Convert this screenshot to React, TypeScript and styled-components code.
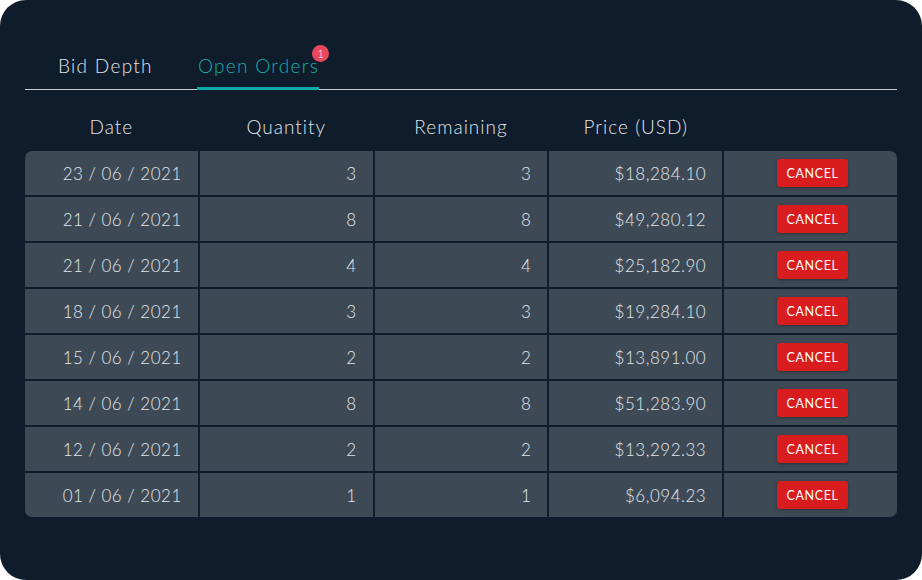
import React from "react";
import styled, { createGlobalStyle } from "styled-components";

const Global = createGlobalStyle`
  html, body { margin: 0; padding: 0; background: #ffffff; }
  body { font-family: "Lato", "Open Sans", sans-serif; }
`;

const Card = styled.div`
  width: 922px;
  height: 580px;
  box-sizing: border-box;
  background: #0e1c2b;
  border-radius: 26px;
  padding: 44px 25px 0 25px;
`;

const TabBar = styled.div`
  display: flex;
  gap: 44px;
  padding-left: 32px;
  border-bottom: 1px solid #c9ced3;
`;

const Tab = styled.div<{ $active?: boolean }>`
  position: relative;
  font-size: 19px;
  font-weight: 300;
  letter-spacing: 1.3px;
  line-height: 22px;
  padding: 11px 0 10px 1px;
  color: ${(p) => (p.$active ? "#17aeac" : "#e0e4e8")};
  border-bottom: 3px solid ${(p) => (p.$active ? "#0fa9a7" : "transparent")};
  margin-bottom: -1px;
`;

const Badge = styled.span`
  position: absolute;
  top: 1px;
  right: -10px;
  width: 17px;
  height: 17px;
  border-radius: 50%;
  background: #e8475c;
  color: #fff;
  font-size: 11px;
  letter-spacing: 0;
  line-height: 17px;
  text-align: center;
`;

const Columns = `
  display: grid;
  grid-template-columns: repeat(5, 1fr);
  column-gap: 2px;
`;

const HeaderRow = styled.div`
  ${Columns}
  padding: 25px 0 0;
  height: 61px;
  box-sizing: border-box;
`;

const HeaderCell = styled.div`
  text-align: center;
  font-size: 19px;
  font-weight: 300;
  letter-spacing: 1px;
  color: #e0e4e8;
  line-height: 24px;
`;

const Table = styled.div`
  display: flex;
  flex-direction: column;
  gap: 2px;
  border-radius: 7px;
  overflow: hidden;
`;

const Row = styled.div`
  ${Columns}
  height: 44px;
`;

const Cell = styled.div`
  background: #3d4a56;
  color: #e2e6ea;
  font-size: 17px;
  font-weight: 300;
  letter-spacing: 0.5px;
  display: flex;
  align-items: center;
  justify-content: flex-end;
  padding-right: 16px;
`;

const ActionCell = styled(Cell)`
  justify-content: center;
  padding: 0 0 0 4px;
`;

const CancelButton = styled.button`
  width: 71px;
  height: 28px;
  border: none;
  border-radius: 3px;
  background: #d91c1e;
  color: #ffffff;
  font-family: "Lato", sans-serif;
  font-size: 12.5px;
  letter-spacing: 0.6px;
  box-shadow: 0 1px 3px rgba(0, 0, 0, 0.35);
  padding: 0;
  cursor: pointer;
`;

const orders = [
  ["23 / 06 / 2021", "3", "3", "$18,284.10"],
  ["21 / 06 / 2021", "8", "8", "$49,280.12"],
  ["21 / 06 / 2021", "4", "4", "$25,182.90"],
  ["18 / 06 / 2021", "3", "3", "$19,284.10"],
  ["15 / 06 / 2021", "2", "2", "$13,891.00"],
  ["14 / 06 / 2021", "8", "8", "$51,283.90"],
  ["12 / 06 / 2021", "2", "2", "$13,292.33"],
  ["01 / 06 / 2021", "1", "1", "$6,094.23"],
];

export default function App() {
  return (
    <>
      <Global />
      <Card>
        <TabBar>
          <Tab>Bid Depth</Tab>
          <Tab $active>
            Open Orders
            <Badge>1</Badge>
          </Tab>
        </TabBar>
        <HeaderRow>
          <HeaderCell>Date</HeaderCell>
          <HeaderCell>Quantity</HeaderCell>
          <HeaderCell>Remaining</HeaderCell>
          <HeaderCell>Price (USD)</HeaderCell>
          <HeaderCell />
        </HeaderRow>
        <Table>
          {orders.map((o, i) => (
            <Row key={i}>
              {o.map((v, j) => (
                <Cell key={j}>{v}</Cell>
              ))}
              <ActionCell>
                <CancelButton>CANCEL</CancelButton>
              </ActionCell>
            </Row>
          ))}
        </Table>
      </Card>
    </>
  );
}
